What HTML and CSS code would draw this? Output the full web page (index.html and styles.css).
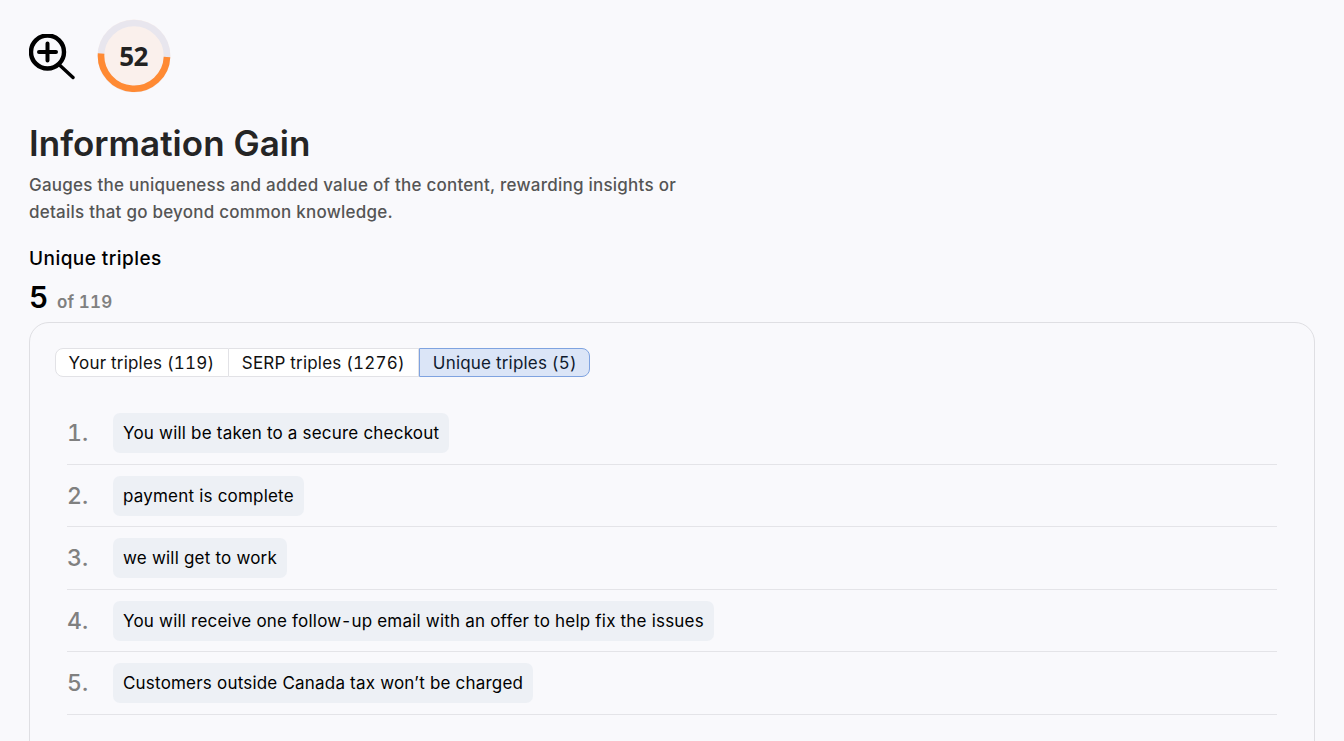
FILE: index.html
```html
<!DOCTYPE html>
<html lang="en">
<head>
<meta charset="utf-8">
<title>Information Gain</title>
<link rel="stylesheet" href="styles.css">
</head>
<body>
<main class="page">
  <div class="top">
    <svg class="zoom-icon" width="46" height="46" viewBox="0 0 46 46" fill="none" stroke="#000" stroke-linecap="round">
      <circle cx="18.5" cy="18" r="16.5" stroke-width="4.4"/>
      <path d="M18.5 9.5v17M10 18h17" stroke-width="4"/>
      <path d="M30.5 31l13.5 12.5" stroke-width="3.4"/>
    </svg>
    <div class="gauge">
      <svg width="74" height="74" viewBox="0 0 74 74" fill="none">
        <circle cx="37" cy="37" r="36.5" fill="#faf0ec"/>
        <circle cx="37" cy="37" r="33" stroke="#e8e6ee" stroke-width="6.6"/>
        <path d="M4.100 34.500A33 33 0 1 0 70 38" stroke="#ff8a33" stroke-width="6.6"/>
      </svg>
      <span class="gauge-value">52</span>
    </div>
  </div>
  <h1 class="title">Information Gain</h1>
  <p class="desc">Gauges the uniqueness and added value of the content, rewarding insights or details that go beyond common knowledge.</p>
  <h2 class="sub">Unique triples</h2>
  <div class="count"><span class="count-num">5</span><span class="count-of">of 119</span></div>
  <section class="card">
    <div class="tabs">
      <button class="tab">Your triples (119)</button>
      <button class="tab">SERP triples (1276)</button>
      <button class="tab active">Unique triples (5)</button>
    </div>
    <ol class="list">
      <li class="row"><span class="num">1.</span><span class="chip">You will be taken to a secure checkout</span></li>
      <li class="row"><span class="num">2.</span><span class="chip">payment is complete</span></li>
      <li class="row"><span class="num">3.</span><span class="chip">we will get to work</span></li>
      <li class="row"><span class="num">4.</span><span class="chip">You will receive one follow<span class="hyphen">-</span>up email with an offer to help fix the issues</span></li>
      <li class="row"><span class="num">5.</span><span class="chip">Customers outside Canada tax won’t be charged</span></li>
    </ol>
  </section>
</main>
</body>
</html>
```
FILE: styles.css
```css
* { box-sizing: border-box; }
html, body { margin: 0; height: 100%; overflow: hidden; }
body { background: #f9f9fc; font-family: Inter, "Liberation Sans", sans-serif; color: #000; }
.page { padding: 19px 29px 0 29px; }
.top { display: flex; align-items: center; gap: 22px; height: 74px; }
.zoom-icon { flex: none; margin-top: 1px; }
.gauge { position: relative; width: 74px; height: 74px; }
.gauge svg { display: block; }
.gauge-value { position: absolute; inset: 0; display: flex; align-items: center; justify-content: center; font: 700 26px "Open Sans", sans-serif; letter-spacing: -0.5px; color: #222; padding-right: 1px; }
.title { margin: 29px 0 0; font-size: 35px; line-height: 42px; font-weight: 560; letter-spacing: 0.03px; color: #252525; }
.desc { margin: 8px 0 0; width: 670px; font-size: 17px; font-weight: 450; letter-spacing: 0.24px; line-height: 27px; color: #555; }
.sub { margin: 19px 0 0; font-size: 19px; letter-spacing: 0.45px; line-height: 28px; font-weight: 450; }
.count { display: flex; align-items: baseline; gap: 9px; margin-top: 6px; height: 36px; }
.count-num { font-size: 30px; line-height: 36px; font-weight: 600; }
.count-of { font-size: 17px; letter-spacing: 0.15px; font-weight: 600; color: #808080; font-variant-numeric: tabular-nums; }
.card { margin-top: 7px; height: 520px; border: 1px solid #dfdfe3; border-radius: 20px; padding: 25px 37px 0 25px; }
.tabs { display: flex; }
.tab { height: 29px; padding: 0 13px; border: 1px solid #e2e2e6; border-left-width: 0; background: #fff; font: 400 17px Inter, sans-serif; letter-spacing: 0.2px; font-variant-numeric: tabular-nums; color: #111; }
.tab:first-child { border-left-width: 1px; border-radius: 8px 0 0 8px; padding-left: 12.6px; padding-right: 13.5px; }
.tab.active { background: #dbe5f7; border: 1px solid #7fa3e0; border-radius: 0 8px 8px 0; color: #0f1a2e; padding-right: 12px; }
.list { list-style: none; margin: 25.25px 0 0 12px; padding: 0; }
.row { display: flex; align-items: center; height: 62.5px; border-bottom: 1px solid #e4e4e8; }
.num { width: 46px; font-size: 23px; font-weight: 500; font-variant-numeric: tabular-nums; color: #808080; }
.chip { padding: 0 10px; height: 40px; line-height: 40px; border-radius: 7px; background: #edf0f5; font-size: 17px; letter-spacing: 0.2px; }
.hyphen { padding: 0 1px; }
```
